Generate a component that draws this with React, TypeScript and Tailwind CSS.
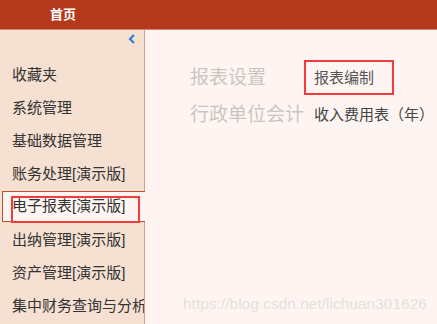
const menu = [
  '收藏夹',
  '系统管理',
  '基础数据管理',
  '账务处理[演示版]',
  '电子报表[演示版]',
  '出纳管理[演示版]',
  '资产管理[演示版]',
  '集中财务查询与分析',
];

const ACTIVE = 4;

const App = () => {
  return (
    <div className="relative w-[437px] h-[324px] overflow-hidden bg-[#fef5f2] font-['Liberation_Sans','Noto_Sans_CJK_SC',sans-serif]">
      {/* top bar */}
      <div className="h-[30px] bg-[#b4381c] border-b border-[#d9826e] flex items-center pl-[50px]">
        <span className="text-white text-[13px] font-bold leading-none">首页</span>
      </div>

      <div className="flex h-[294px]">
        {/* sidebar */}
        <div className="w-[145px] shrink-0 bg-[#f5e0d2] border-r border-[#e0998a]">
          <div className="h-[29px] flex justify-end items-start pt-[4px] pr-[8px]">
            <svg width="8" height="10" viewBox="0 0 8 10">
              <polyline points="6,1 2,5 6,9" fill="none" stroke="#2f7fd3" strokeWidth="2.2" />
            </svg>
          </div>
          <ul>
            {menu.map((item, i) =>
              i === ACTIVE ? (
                <li
                  key={item}
                  className="relative z-10 h-[31px] mb-[2px] ml-[2px] -mr-px flex items-center pl-[9px] bg-[#fef5f2] border-y border-l border-[#c0502e] text-[15px] text-[#333] whitespace-nowrap"
                >
                  {item}
                  <span className="absolute left-[8px] top-[4px] w-[129px] h-[27px] border-2 border-[#f23b3b]" />
                </li>
              ) : (
                <li
                  key={item}
                  className="h-[33px] flex items-center pl-[12px] text-[15px] text-[#333] whitespace-nowrap overflow-hidden"
                >
                  {item}
                </li>
              )
            )}
          </ul>
        </div>

        {/* content */}
        <div className="flex-1 pl-[45px] pt-[30px]">
          <div className="grid grid-cols-[114px_auto] items-center">
            <div className="text-[19px] text-[#cbc5c2] leading-none whitespace-nowrap">报表设置</div>
            <div>
              <span className="inline-flex items-center h-[35px] pl-[8px] pr-[18px] border-2 border-[#f23b3b] text-[15px] text-[#555] leading-none">
                报表编制
              </span>
            </div>
            <div className="mt-[10px] text-[19px] text-[#cbc5c2] leading-none whitespace-nowrap">行政单位会计</div>
            <div className="mt-[10px] pl-[10px] text-[15px] text-[#444] leading-none whitespace-nowrap">收入费用表（年）</div>
          </div>
        </div>
      </div>

      {/* watermark */}
      <div className="absolute left-[183px] top-[296px] text-[15.5px] text-[#e8dfdc] whitespace-nowrap leading-none">
        https://blog.csdn.net/lichuan301626
      </div>
    </div>
  );
};

export default App;
